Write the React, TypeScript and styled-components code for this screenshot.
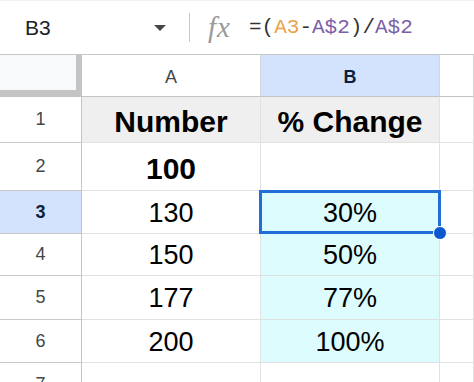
import React from "react";
import styled, { createGlobalStyle } from "styled-components";

const GlobalStyle = createGlobalStyle`
  html, body {
    margin: 0;
    padding: 0;
    background: #ffffff;
  }
  * {
    box-sizing: border-box;
  }
`;

const Page = styled.div`
  width: 474px;
  height: 382px;
  overflow: hidden;
  background: #ffffff;
  font-family: "Liberation Sans", Arial, sans-serif;
`;

const FormulaBar = styled.div`
  display: flex;
  align-items: center;
  height: 55px;
  padding-left: 25px;
  border-top: 1px solid #f1f1f1;
  border-bottom: 1px solid #c7c7c7;
`;

const NameBox = styled.div`
  display: flex;
  align-items: center;
  justify-content: space-between;
  width: 141px;
`;

const NameText = styled.span`
  font-size: 21px;
  color: #202124;
`;

const DropArrow = styled.span`
  width: 0;
  height: 0;
  border-left: 6px solid transparent;
  border-right: 6px solid transparent;
  border-top: 6px solid #444746;
`;

const Divider = styled.span`
  width: 1px;
  height: 29px;
  margin-left: 23px;
  background: #c7c7c7;
`;

const FxIcon = styled.span`
  margin-left: 18px;
  font-family: "Liberation Serif", "Times New Roman", serif;
  font-style: italic;
  font-size: 29px;
  letter-spacing: 1px;
  color: #9a9a9a;
  line-height: 1;
`;

const Formula = styled.div`
  margin-left: 18px;
  font-family: "Liberation Mono", "Courier New", monospace;
  font-size: 21px;
  color: #333333;
`;

const Token = styled.span<{ $color?: string }>`
  color: ${(p) => p.$color || "#333333"};
`;

const Grid = styled.div`
  display: grid;
  grid-template-columns: 82px 179px 179px 1fr;
  grid-template-rows: 42px 46px 48px 43px 42px 44px 43px 43px;
`;

const Corner = styled.div`
  background: #f8f9fa;
  border-right: 6px solid #c4c4c4;
  border-bottom: 7px solid #c4c4c4;
`;

const ColHeader = styled.div<{ $active?: boolean }>`
  display: flex;
  align-items: center;
  justify-content: center;
  padding-top: 3px;
  font-size: 18px;
  font-weight: ${(p) => (p.$active ? 700 : 400)};
  color: ${(p) => (p.$active ? "#0b1f3f" : "#444746")};
  background: ${(p) => (p.$active ? "#d3e3fd" : "#ffffff")};
  border-right: 1px solid #d6d6d6;
  border-bottom: 1px solid #c4c4c4;
`;

const RowHeader = styled.div<{ $active?: boolean }>`
  display: flex;
  align-items: center;
  justify-content: center;
  font-size: 18px;
  font-weight: ${(p) => (p.$active ? 700 : 400)};
  color: ${(p) => (p.$active ? "#0b1f3f" : "#444746")};
  background: ${(p) => (p.$active ? "#d3e3fd" : "#ffffff")};
  border-right: 1px solid #c4c4c4;
  border-bottom: 1px solid #c9c9c9;
`;

const Cell = styled.div<{ $bold?: boolean; $bg?: string; $selected?: boolean }>`
  position: relative;
  z-index: ${(p) => (p.$selected ? 2 : 0)};
  display: flex;
  align-items: center;
  justify-content: center;
  padding-top: ${(p) => (p.$bold ? 5 : 2)}px;
  font-size: ${(p) => (p.$bold ? 30 : 27)}px;
  font-weight: ${(p) => (p.$bold ? 700 : 400)};
  color: #000000;
  background: ${(p) => p.$bg || "#ffffff"};
  border-right: 1px solid #e1e1e1;
  border-bottom: 1px solid #e1e1e1;
`;

const Selection = styled.div`
  position: absolute;
  top: -1px;
  left: -2px;
  right: -2px;
  bottom: -1px;
  border: 3px solid #1f6fd6;
  pointer-events: none;
`;

const FillHandle = styled.div`
  position: absolute;
  right: -9px;
  bottom: -9px;
  width: 14px;
  height: 14px;
  border-radius: 50%;
  background: #0b57d0;
  border: 1px solid #ffffff;
`;

const HEADER_BG = "#efefef";
const PERCENT_BG = "#dcfcfe";

type Row = { a: string; b: string; bold?: boolean; shade?: string; bshade?: string };

const rows: Row[] = [
  { a: "Number", b: "% Change", bold: true, shade: HEADER_BG, bshade: HEADER_BG },
  { a: "100", b: "", bold: true },
  { a: "130", b: "30%", bshade: PERCENT_BG },
  { a: "150", b: "50%", bshade: PERCENT_BG },
  { a: "177", b: "77%", bshade: PERCENT_BG },
  { a: "200", b: "100%", bshade: PERCENT_BG },
  { a: "", b: "" },
];

export default function App() {
  return (
    <Page>
      <GlobalStyle />
      <FormulaBar>
        <NameBox>
          <NameText>B3</NameText>
          <DropArrow />
        </NameBox>
        <Divider />
        <FxIcon>fx</FxIcon>
        <Formula>
          <Token>=(</Token>
          <Token $color="#e8a446">A3</Token>
          <Token>-</Token>
          <Token $color="#7b5ea7">A$2</Token>
          <Token>)/</Token>
          <Token $color="#7b5ea7">A$2</Token>
        </Formula>
      </FormulaBar>
      <Grid>
        <Corner />
        <ColHeader>A</ColHeader>
        <ColHeader $active>B</ColHeader>
        <ColHeader />
        {rows.map((r, i) => {
          const n = i + 1;
          const selected = n === 3;
          return (
            <React.Fragment key={n}>
              <RowHeader $active={selected}>{n}</RowHeader>
              <Cell $bold={r.bold} $bg={r.shade}>
                {r.a}
              </Cell>
              <Cell $bold={r.bold} $bg={r.bshade} $selected={selected}>
                {r.b}
                {selected && (
                  <Selection>
                    <FillHandle />
                  </Selection>
                )}
              </Cell>
              <Cell />
            </React.Fragment>
          );
        })}
      </Grid>
    </Page>
  );
}
